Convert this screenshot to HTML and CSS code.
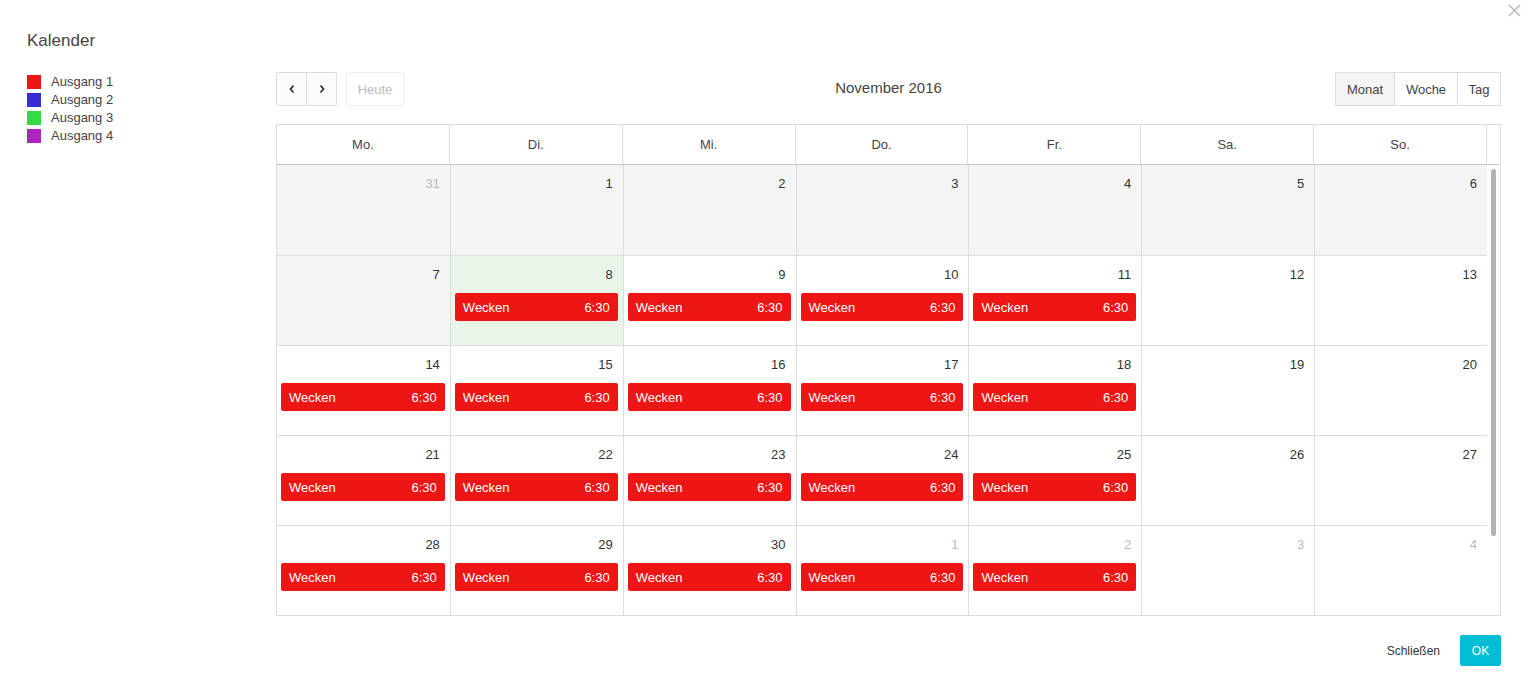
FILE: index.html
```html
<!DOCTYPE html>
<html lang="de">
<head>
<meta charset="utf-8">
<title>Kalender</title>
<link rel="stylesheet" href="styles.css">
</head>
<body>
<div class="dialog">
  <button class="close" aria-label="Schließen">
    <svg width="13" height="13" viewBox="0 0 13 13"><path d="M1 1L12 12M12 1L1 12" stroke="#b5b5b5" stroke-width="1.4" fill="none"/></svg>
  </button>
  <h1 class="title">Kalender</h1>
  <div class="main">
    <ul class="legend">
      <li><span class="sw sw-red"></span>Ausgang 1</li>
      <li><span class="sw sw-blue"></span>Ausgang 2</li>
      <li><span class="sw sw-green"></span>Ausgang 3</li>
      <li><span class="sw sw-purple"></span>Ausgang 4</li>
    </ul>
    <div class="cal">
      <div class="toolbar">
        <div class="tb-left">
          <div class="group">
            <button class="btn nav"><svg width="8" height="10" viewBox="0 0 8 10"><path d="M5.5 1.5L2.5 5L5.5 8.5" stroke="#333" stroke-width="1.8" fill="none"/></svg></button>
            <button class="btn nav"><svg width="8" height="10" viewBox="0 0 8 10"><path d="M2.5 1.5L5.5 5L2.5 8.5" stroke="#333" stroke-width="1.8" fill="none"/></svg></button>
          </div>
          <button class="btn btn-today" disabled>Heute</button>
        </div>
        <div class="tb-title">November 2016</div>
        <div class="tb-right">
          <div class="group">
            <button class="btn view active">Monat</button>
            <button class="btn view">Woche</button>
            <button class="btn view">Tag</button>
          </div>
        </div>
      </div>
      <div class="grid">
        <div class="head">
          <div class="hc">Mo.</div><div class="hc">Di.</div><div class="hc">Mi.</div><div class="hc">Do.</div><div class="hc">Fr.</div><div class="hc">Sa.</div><div class="hc">So.</div><div class="hgutter"></div>
        </div>
        <div class="body">
          <div class="rows">
            <div class="row">
              <div class="day past"><div class="num other">31</div></div>
              <div class="day past"><div class="num">1</div></div>
              <div class="day past"><div class="num">2</div></div>
              <div class="day past"><div class="num">3</div></div>
              <div class="day past"><div class="num">4</div></div>
              <div class="day past"><div class="num">5</div></div>
              <div class="day past"><div class="num">6</div></div>
            </div>
            <div class="row">
              <div class="day past"><div class="num">7</div></div>
              <div class="day is-today"><div class="num">8</div><div class="ev"><span>Wecken</span><span>6:30</span></div></div>
              <div class="day"><div class="num">9</div><div class="ev"><span>Wecken</span><span>6:30</span></div></div>
              <div class="day"><div class="num">10</div><div class="ev"><span>Wecken</span><span>6:30</span></div></div>
              <div class="day"><div class="num">11</div><div class="ev"><span>Wecken</span><span>6:30</span></div></div>
              <div class="day"><div class="num">12</div></div>
              <div class="day"><div class="num">13</div></div>
            </div>
            <div class="row">
              <div class="day"><div class="num">14</div><div class="ev"><span>Wecken</span><span>6:30</span></div></div>
              <div class="day"><div class="num">15</div><div class="ev"><span>Wecken</span><span>6:30</span></div></div>
              <div class="day"><div class="num">16</div><div class="ev"><span>Wecken</span><span>6:30</span></div></div>
              <div class="day"><div class="num">17</div><div class="ev"><span>Wecken</span><span>6:30</span></div></div>
              <div class="day"><div class="num">18</div><div class="ev"><span>Wecken</span><span>6:30</span></div></div>
              <div class="day"><div class="num">19</div></div>
              <div class="day"><div class="num">20</div></div>
            </div>
            <div class="row">
              <div class="day"><div class="num">21</div><div class="ev"><span>Wecken</span><span>6:30</span></div></div>
              <div class="day"><div class="num">22</div><div class="ev"><span>Wecken</span><span>6:30</span></div></div>
              <div class="day"><div class="num">23</div><div class="ev"><span>Wecken</span><span>6:30</span></div></div>
              <div class="day"><div class="num">24</div><div class="ev"><span>Wecken</span><span>6:30</span></div></div>
              <div class="day"><div class="num">25</div><div class="ev"><span>Wecken</span><span>6:30</span></div></div>
              <div class="day"><div class="num">26</div></div>
              <div class="day"><div class="num">27</div></div>
            </div>
            <div class="row">
              <div class="day"><div class="num">28</div><div class="ev"><span>Wecken</span><span>6:30</span></div></div>
              <div class="day"><div class="num">29</div><div class="ev"><span>Wecken</span><span>6:30</span></div></div>
              <div class="day"><div class="num">30</div><div class="ev"><span>Wecken</span><span>6:30</span></div></div>
              <div class="day"><div class="num other">1</div><div class="ev"><span>Wecken</span><span>6:30</span></div></div>
              <div class="day"><div class="num other">2</div><div class="ev"><span>Wecken</span><span>6:30</span></div></div>
              <div class="day"><div class="num other">3</div></div>
              <div class="day"><div class="num other">4</div></div>
            </div>
          </div>
          <div class="gutter"><div class="thumb"></div></div>
        </div>
      </div>
    </div>
  </div>
  <div class="footer">
    <button class="link">Schließen</button>
    <button class="ok">OK</button>
  </div>
</div>
</body>
</html>
```

FILE: styles.css
```css
* { box-sizing: border-box; }
html, body { margin: 0; padding: 0; background: #fff; }
body { font-family: "Liberation Sans", Arial, sans-serif; color: #444; font-size: 13px; }

.dialog { position: relative; padding: 31px 29px 0 27px; }

.close {
  position: absolute; top: 3px; right: 8px;
  width: 15px; height: 15px; padding: 1px; border: 0; background: none; cursor: pointer;
  display: flex; align-items: center; justify-content: center;
}

.title { margin: 0; font-size: 17px; font-weight: normal; line-height: 20px; color: #444; }

.main { display: flex; margin-top: 21px; }

.legend { list-style: none; margin: 0; padding: 1px 0 0 0; width: 249px; flex: none; }
.legend li { display: flex; align-items: center; height: 18px; line-height: 18px; color: #444; font-size: 13px; }
.sw { width: 14px; height: 14px; margin-right: 10px; flex: none; }
.sw-red { background: #ee1515; }
.sw-blue { background: #382cd2; }
.sw-green { background: #33dc44; }
.sw-purple { background: #b025bf; }

.cal { flex: 1; min-width: 0; }

.toolbar { display: flex; align-items: center; justify-content: space-between; height: 34px; position: relative; }
.tb-left { display: flex; gap: 9px; }
.tb-right { display: flex; }
.group { display: flex; }
.tb-title {
  position: absolute; left: 0; right: 0; top: 0; text-align: center;
  line-height: 32px; font-size: 15px; color: #444; pointer-events: none;
}

.btn {
  height: 34px; border: 1px solid #ddd; background: #fcfcfc; color: #444;
  font-family: "Liberation Sans", Arial, sans-serif; font-size: 13px; padding: 0 10px; margin: 0;
  border-radius: 0; cursor: pointer;
}
.group .btn + .btn { margin-left: -1px; }
.nav { width: 31px; padding: 0; display: flex; align-items: center; justify-content: center; }
.group .nav:first-child { border-radius: 2px 0 0 2px; }
.group .nav:last-child { border-radius: 0 2px 2px 0; }
.btn-today { width: 58px; padding: 0; color: #bbb; border-color: #eee; background: #fff; border-radius: 2px; }
.view { background: #fff; }
.view.active { background: #f4f4f4; width: 60px; padding: 0; }
.view:nth-child(2) { width: 64px; padding: 0; }
.view:nth-child(3) { width: 44px; padding: 0; }

.grid { margin-top: 18px; border: 1px solid #ddd; }

.head { display: grid; grid-template-columns: repeat(7, minmax(0, 1fr)) 13px; border-bottom: 1px solid #c9c9c9; height: 40px; }
.hc { border-right: 1px solid #ddd; text-align: center; line-height: 39px; font-size: 13px; color: #444; }

.body { display: flex; }
.rows { flex: 1; min-width: 0; }
.row { display: grid; grid-template-columns: repeat(7, minmax(0, 1fr)); height: 90px; }
.row + .row { border-top: 1px solid #ddd; }
.day { border-left: 1px solid #ddd; padding: 11px 5px 0 4px; min-width: 0; }
.day:first-child { border-left: 0; padding-left: 4px; }
.day.past { background: #f4f4f4; }
.day.is-today { background: #e8f5e8; }
.num { text-align: right; line-height: 16px; font-size: 13px; color: #333; padding-right: 5px; }
.num.other { color: #bbb; }

.ev {
  display: flex; justify-content: space-between; align-items: center;
  margin-top: 10px; height: 28px; padding: 0 8px;
  background: #ee1515; color: #fff; border-radius: 2px; font-size: 13px;
}

.gutter { width: 13px; flex: none; padding: 4px 4px 0 4px; }
.thumb { width: 5px; height: 367px; background: #b3b3b3; border-radius: 3px; }

.footer { display: flex; justify-content: flex-end; align-items: center; gap: 20px; margin-top: 19px; }
.link { border: 0; background: none; font-family: "Liberation Sans", Arial, sans-serif; font-size: 12px; color: #333; padding: 0; cursor: pointer; }
.ok {
  width: 41px; height: 31px; border: 0; border-radius: 2px; background: #00bcd4; color: #fff;
  font-family: "Liberation Sans", Arial, sans-serif; font-size: 12px; padding: 0; cursor: pointer;
}
```
